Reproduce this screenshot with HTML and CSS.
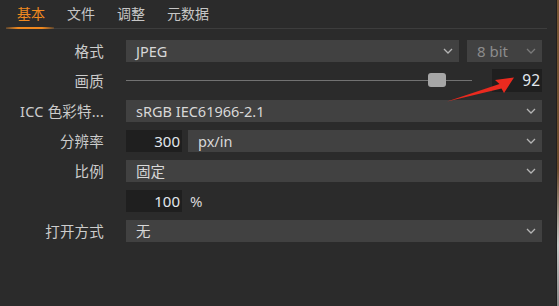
FILE: index.html
```html
<!DOCTYPE html>
<html>
<head>
<meta charset="utf-8">
<link rel="stylesheet" href="styles.css">
</head>
<body>
<div class="app">
  <div class="panel">
    <div class="tabs">
      <div class="tab active">基本</div>
      <div class="tab">文件</div>
      <div class="tab">调整</div>
      <div class="tab">元数据</div>
    </div>
    <div class="form">
      <div class="label">格式</div>
      <div class="ctrl split">
        <div class="select grow"><span>JPEG</span><svg class="chev" viewBox="0 0 10 6"><path d="M1 1 L5 5 L9 1"/></svg></div>
        <div class="select bits dim"><span>8 bit</span><svg class="chev" viewBox="0 0 10 6"><path d="M1 1 L5 5 L9 1"/></svg></div>
      </div>

      <div class="label">画质</div>
      <div class="ctrl split">
        <div class="slider"><div class="track"></div><div class="thumb"></div></div>
        <div class="num q">92</div>
      </div>

      <div class="label">ICC 色彩特...</div>
      <div class="ctrl">
        <div class="select grow"><span>sRGB IEC61966-2.1</span><svg class="chev" viewBox="0 0 10 6"><path d="M1 1 L5 5 L9 1"/></svg></div>
      </div>

      <div class="label">分辨率</div>
      <div class="ctrl split6">
        <div class="num small">300</div>
        <div class="select grow"><span>px/in</span><svg class="chev" viewBox="0 0 10 6"><path d="M1 1 L5 5 L9 1"/></svg></div>
      </div>

      <div class="label">比例</div>
      <div class="ctrl">
        <div class="select grow"><span>固定</span><svg class="chev" viewBox="0 0 10 6"><path d="M1 1 L5 5 L9 1"/></svg></div>
      </div>

      <div class="label"></div>
      <div class="ctrl split8">
        <div class="num small">100</div>
        <div class="unit">%</div>
      </div>

      <div class="label">打开方式</div>
      <div class="ctrl">
        <div class="select grow"><span>无</span><svg class="chev" viewBox="0 0 10 6"><path d="M1 1 L5 5 L9 1"/></svg></div>
      </div>
    </div>
    <svg class="arrow" viewBox="0 0 559 306" width="559" height="306">
      <polygon points="447,101.5 499.5,84 495,80 514,77.5 504,93 501.5,88.5"/>
    </svg>
  </div>
  <div class="edge"></div>
</div>
</body>
</html>
```

FILE: styles.css
```css
* { box-sizing: border-box; }
html, body {
  margin: 0;
  padding: 0;
  width: 559px;
  height: 306px;
  overflow: hidden;
  background: #2b2b2b;
  font-family: "Noto Sans", "Noto Sans CJK SC", sans-serif;
  font-size: 14.5px;
  color: #d4d4d4;
}
.app {
  display: flex;
  width: 559px;
  height: 306px;
}
.panel {
  flex: 0 0 556px;
  height: 306px;
  position: relative;
  background: #2b2b2b;
}
.edge {
  flex: 0 0 3px;
  border-left: 1px solid #1f1f1f;
  background: linear-gradient(#7a5634 0%, #6b4a2c 55%, #c9c9c9 80%, #8a8a8a 100%);
}
.tabs {
  display: flex;
  margin: 0 9px 0 6px;
  height: 29px;
  border-bottom: 1px solid #3d3d3d;
  position: relative;
}
.tab {
  padding: 0 11px;
  height: 28px;
  line-height: 26px;
  color: #c6c6c6;
  font-family: "Noto Sans CJK SC", sans-serif;
  font-size: 14px;
  position: relative;
}
.tab.active {
  color: #f0891f;
}
.tab.active::after {
  content: "";
  position: absolute;
  left: 0;
  right: 2px;
  bottom: -1px;
  height: 2px;
  background: linear-gradient(90deg, rgba(240,137,31,0.2), #f0891f 25%, #f0891f 75%, rgba(240,137,31,0.2));
}
.form {
  display: grid;
  grid-template-columns: 104px 416px;
  column-gap: 22px;
  row-gap: 8px;
  grid-auto-rows: 22px;
  margin-top: 11px;
}
.label {
  text-align: right;
  line-height: 22px;
  color: #cccccc;
  white-space: nowrap;
  letter-spacing: 0.2px;
}
.ctrl {
  display: flex;
  height: 22px;
}
.split { gap: 8px; }
.split6 { gap: 6px; }
.split8 { gap: 8px; }
.select {
  background: #414141;
  height: 22px;
  display: flex;
  align-items: center;
  padding: 0 6px 0 10px;
  color: #d8d8d8;
}
.select span { flex: 1; line-height: 22px; }
.grow { flex: 1; }
.bits { flex: 0 0 75px; font-size: 15px; }
.dim { color: #8c8c8c; }
.dim .chev path { stroke: #7a7a7a; }
.chev {
  width: 10px;
  height: 6px;
  flex: 0 0 10px;
}
.chev path {
  fill: none;
  stroke: #b4b4b4;
  stroke-width: 1.3;
}
.slider {
  flex: 0 0 346px;
  position: relative;
  height: 22px;
}
.track {
  position: absolute;
  left: 0;
  right: 0;
  top: 10px;
  height: 1px;
  background: #727272;
}
.thumb {
  position: absolute;
  left: 302px;
  top: 3px;
  width: 18px;
  height: 14px;
  border-radius: 3px;
  background: #a6a6a6;
}
.num {
  background: #1f1f1f;
  height: 22px;
  line-height: 22px;
  text-align: right;
  padding-right: 2px;
  color: #e2e8ee;
  font-size: 15px;
}
.q {
  flex: 0 0 50px;
  margin-left: 12px;
  margin-top: -1px;
  height: 23px;
  font-size: 15.5px;
}
.small { flex: 0 0 56px; }
.unit {
  line-height: 22px;
  color: #d8d8d8;
  font-size: 15px;
}
.arrow {
  position: absolute;
  left: 0;
  top: 0;
  pointer-events: none;
}
.arrow polygon { fill: #ea2a1f; }
```
